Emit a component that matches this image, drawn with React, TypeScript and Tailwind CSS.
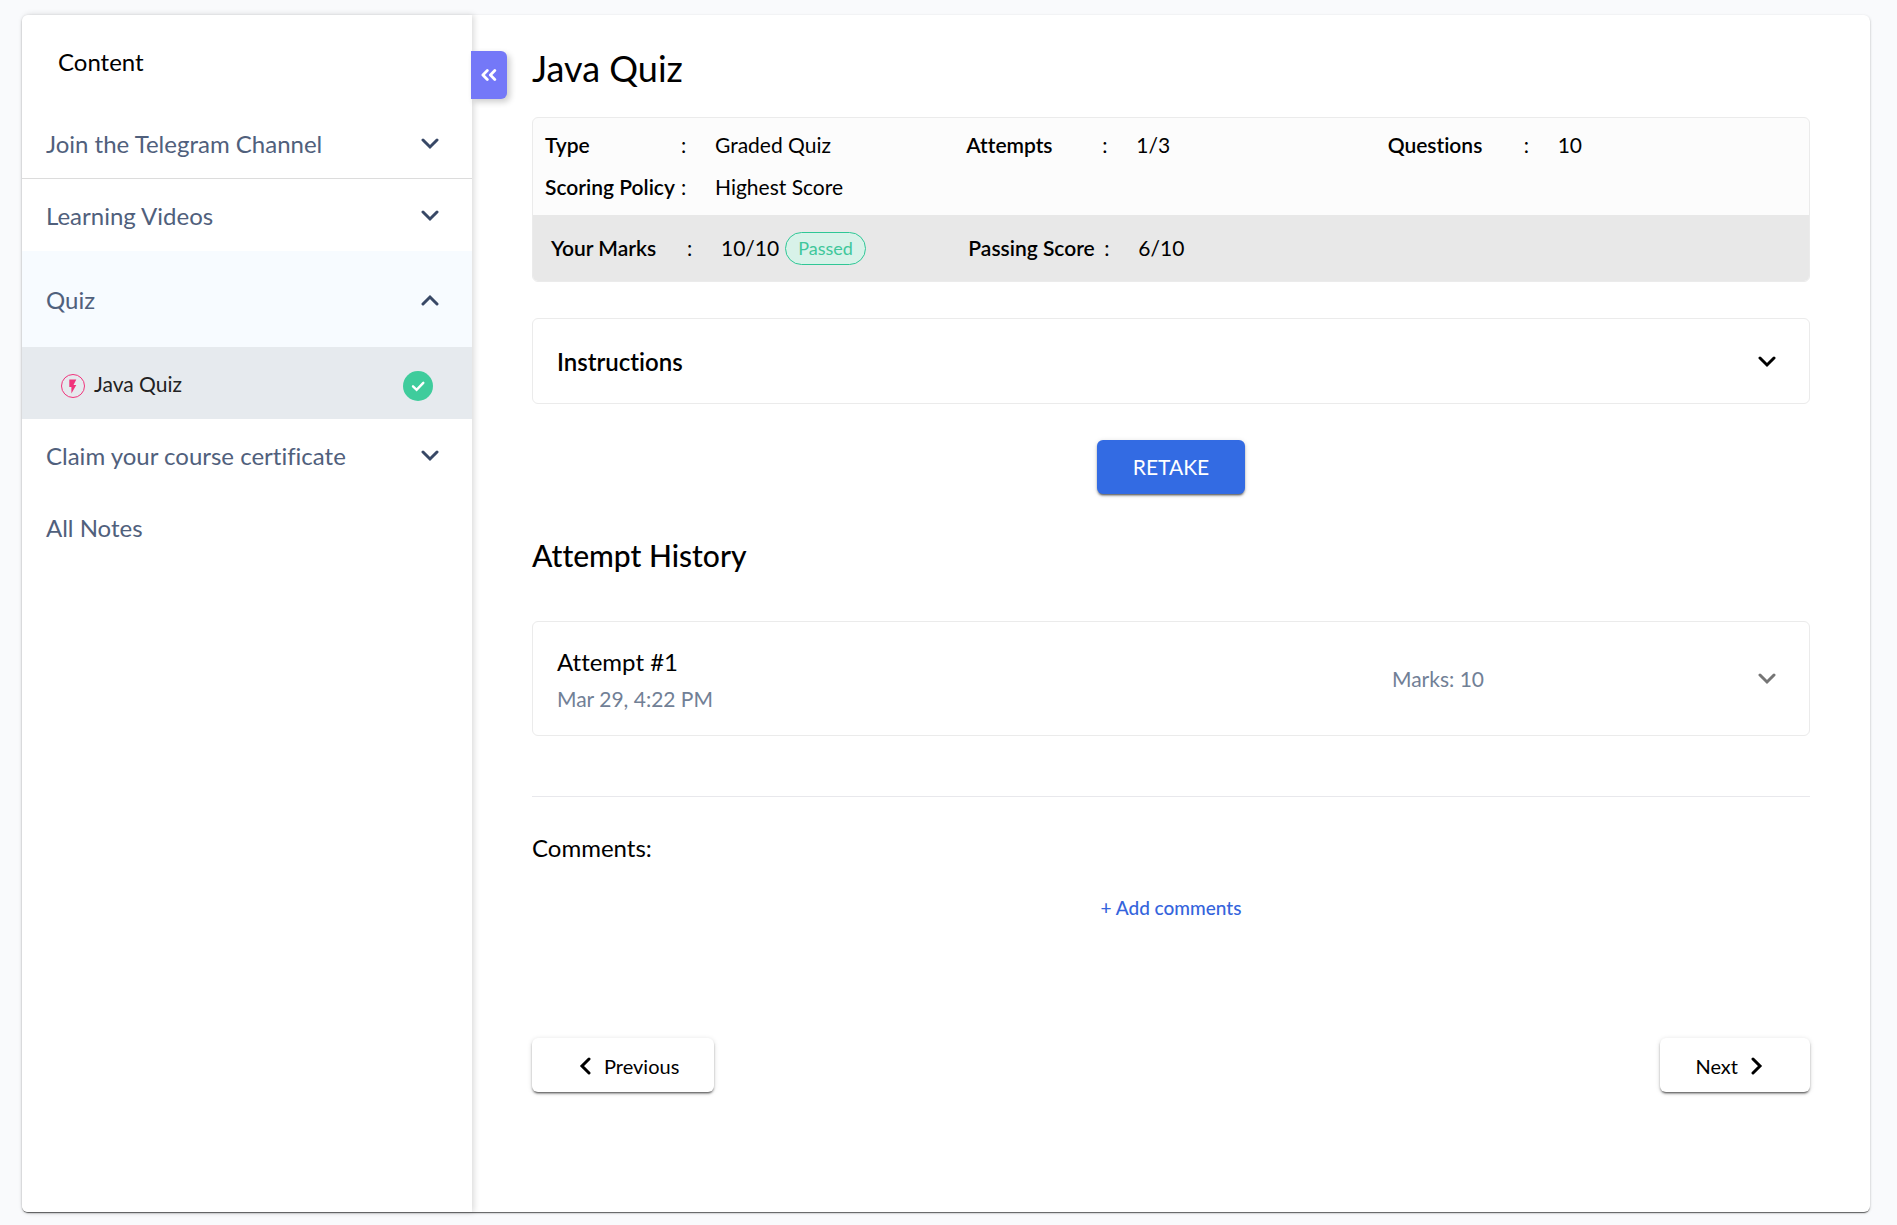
import React, { useState } from "react";

type IconProps = { className?: string };

function Chevron({ className = "" }: IconProps) {
  return (
    <svg viewBox="0 0 18 12" className={"h-3 w-[18px] shrink-0 " + className} fill="none" stroke="currentColor" strokeWidth="3" strokeLinecap="round" aria-hidden="true">
      <path d="M2 2l7 7 7-7" />
    </svg>
  );
}

function DoubleLeft() {
  return (
    <svg viewBox="0 0 16 12" className="h-3 w-4" fill="none" stroke="currentColor" strokeWidth="2.8" strokeLinecap="round" strokeLinejoin="round" aria-hidden="true">
      <path d="M6.300 1.600L1.900 6l4.400 4.400M13.800 1.600L9.400 6l4.400 4.400" />
    </svg>
  );
}

function BoltIcon() {
  return (
    <svg viewBox="0 0 24 24" className="mt-1 h-6 w-6 shrink-0" aria-hidden="true">
      <circle cx="12" cy="12" r="11.5" fill="none" stroke="#f0337b" />
      <path transform="translate(3.400 4) scale(0.700)" d="M7 2v11h3v9l7-12h-4l4-8z" fill="#f0337b" />
    </svg>
  );
}

function CheckIcon() {
  return (
    <svg viewBox="0 0 30 30" className="mt-1 h-[30px] w-[30px] shrink-0" role="img" aria-label="Completed">
      <circle cx="15" cy="15" r="15" fill="#3fcc9c" />
      <path d="M10 15.300l3.600 3.500 6.700-7" fill="none" stroke="#fff" strokeWidth="2.400" strokeLinecap="round" />
    </svg>
  );
}

function Section({ title, open, line }: { title: string; open?: boolean; line?: boolean }) {
  return (
    <button
      type="button"
      aria-expanded={!!open}
      className={
        "flex w-full cursor-pointer items-center justify-between pt-0.5 pl-6 pr-[33px] text-left text-2xl text-[#50607c] " +
        (open ? "h-24 bg-[#f7fbff]" : "h-[72px]") +
        (line ? " border-b border-[#dcdcdc]" : "")
      }
    >
      {title}
      <Chevron className={open ? "rotate-180 text-[#384866]" : "text-[#384866]"} />
    </button>
  );
}

function Field({ label, children }: { label: string; children: React.ReactNode }) {
  return (
    <div className="flex items-center text-[21px] leading-[30px]">
      <dt className="flex shrink-0 items-center">
        <span className="w-[136px] font-semibold whitespace-nowrap">{label}</span>
        <span className="w-[34px]">:</span>
      </dt>
      <dd className="flex items-center gap-1.5">{children}</dd>
    </div>
  );
}

const raised =
  "shadow-[0_3px_1px_-2px_rgba(0,0,0,0.3),0_2px_2px_0_rgba(0,0,0,0.3),0_1px_5px_0_rgba(0,0,0,0.15)]";

export default function App() {
  const [expanded, setExpanded] = useState(true);
  return (
    <div className="min-h-screen bg-[#f9fafc] pt-[15px] pr-[27px] pb-[13px] pl-[22px] font-['Lato',sans-serif] text-black [font-variant-ligatures:none]">
      <div className="flex min-h-[1197px] rounded-md bg-white shadow-[0_2px_1px_-1px_rgba(0,0,0,0.4),0_1px_1px_0_rgba(0,0,0,0.25),0_1px_3px_0_rgba(0,0,0,0.2)]">
        {expanded && (
          <aside className="w-[450px] shrink-0 rounded-l-md bg-white shadow-[2px_0_6px_rgba(0,0,0,0.15)]">
            <h2 className="px-9 pt-8 pb-[30px] text-2xl leading-[30px]">Content</h2>
            <nav aria-label="Course content">
              <Section title="Join the Telegram Channel" line />
              <Section title="Learning Videos" />
              <Section title="Quiz" open />
              <a href="#java-quiz" className="flex h-[72px] items-center bg-[#e6eaee] pt-0.5 pr-[39px] pl-[39px] text-[21px] text-[#222]">
                <BoltIcon />
                <span className="ml-[9px] flex-1">Java Quiz</span>
                <CheckIcon />
              </a>
              <Section title="Claim your course certificate" />
              <a href="#notes" className="flex h-[72px] items-center px-6 pt-0.5 text-2xl text-[#50607c]">
                All Notes
              </a>
            </nav>
          </aside>
        )}
        <button
          type="button"
          aria-label="Toggle content panel"
          onClick={() => setExpanded(!expanded)}
          className="z-10 mt-9 -ml-px flex h-12 w-9 shrink-0 cursor-pointer items-center justify-center rounded-r-md bg-[#7478f8] text-white shadow-[3px_3px_6px_rgba(0,0,0,0.2)]"
        >
          <DoubleLeft />
        </button>
        <main id="java-quiz" className="min-w-0 flex-1 pr-[60px] pl-[25px]">
          <h1 className="pt-[31px] text-4xl leading-[44px]">Java Quiz</h1>

          <div className="mt-[27px] overflow-hidden rounded-md border border-[#ebebeb] bg-[#fcfcfc]">
            <dl className="grid grid-cols-3 gap-y-3 pt-3 pb-[13px] pl-3">
              <Field label="Type">Graded Quiz</Field>
              <Field label="Attempts">1/3</Field>
              <Field label="Questions">10</Field>
              <Field label="Scoring Policy">Highest Score</Field>
            </dl>
            <dl className="grid h-[66px] grid-cols-3 items-center bg-[#e8e8e8] pr-1.5 pl-[18px]">
              <Field label="Your Marks">
                10/10
                <span className="rounded-full border border-[#2fc796] bg-[#d8f2e9] px-3 text-lg leading-[31px] text-[#3fc79b]">Passed</span>
              </Field>
              <Field label="Passing Score">6/10</Field>
            </dl>
          </div>

          <button type="button" aria-expanded="false" className="mt-9 flex h-[86px] w-full cursor-pointer items-center justify-between rounded-md border border-[#ebebeb] pt-0.5 pr-[33px] pl-6 text-2xl font-semibold">
            Instructions
            <Chevron />
          </button>

          <div className="mt-9 flex justify-center">
            <button type="button" className={"h-[54px] cursor-pointer rounded-md bg-[#336be3] px-9 text-[21px] text-white " + raised}>
              RETAKE
            </button>
          </div>

          <h2 className="mt-[41px] text-[30px] leading-10 font-medium">Attempt History</h2>

          <button type="button" aria-expanded="false" className="mt-[46px] flex h-[115px] w-full cursor-pointer items-center rounded-md border border-[#ebebeb] pr-[33px] pl-6 text-left">
            <span className="flex flex-1 flex-col pt-1">
              <span className="text-2xl leading-9">Attempt #1</span>
              <span className="text-[21px] leading-[38px] text-[#718096]">Mar 29, 4:22 PM</span>
            </span>
            <span className="w-[366px] text-[21px] text-[#718096]">Marks: 10</span>
            <Chevron className="text-[#757575]" />
          </button>

          <hr className="mt-[60px] border-[#e8e8ec]" />

          <h3 className="mt-[33px] text-2xl leading-9">Comments:</h3>
          <div className="mt-6 flex justify-center">
            <button type="button" className="cursor-pointer text-[19px] leading-9 font-medium text-[#3564dc]">+ Add comments</button>
          </div>

          <div className="mt-28 flex justify-between">
            <button type="button" className={"flex h-[54px] cursor-pointer items-center gap-2.5 rounded-md bg-white pt-0.5 pr-[35px] pl-11 text-xl " + raised}>
              <Chevron className="rotate-90" />
              Previous
            </button>
            <button type="button" className={"flex h-[54px] cursor-pointer items-center gap-2.5 rounded-md bg-white pt-0.5 pr-11 pl-[35px] text-xl " + raised}>
              Next
              <Chevron className="-rotate-90" />
            </button>
          </div>
        </main>
      </div>
    </div>
  );
}
